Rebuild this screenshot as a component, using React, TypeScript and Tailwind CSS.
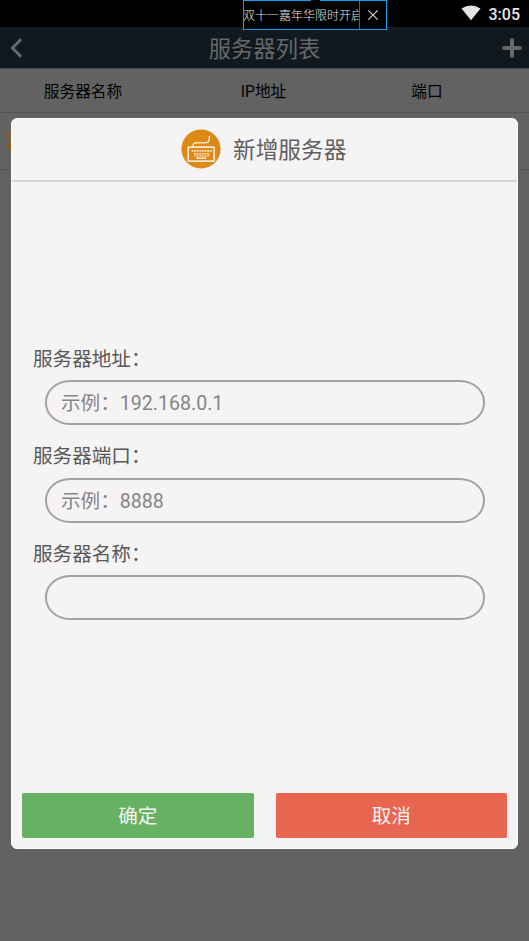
import React from "react";

const columns = [
	{ text: "服务器名称", width: "w-[166px]" },
	{ text: "IP地址", width: "w-[195px]" },
	{ text: "端口", width: "w-[132px]" },
];

const fields = [
	{ label: "服务器地址：", placeholder: "示例：192.168.0.1" },
	{ label: "服务器端口：", placeholder: "示例：8888" },
	{ label: "服务器名称：", placeholder: "" },
];

const StatusBar = () => (
	<div className="flex h-[27px] items-center justify-end bg-black pr-[9px] text-[#e4e4e4]">
		<svg className="mr-[8px] mb-px h-[16px] w-[20px]" viewBox="0 0 20 16" fill="currentColor">
			<path d="M0.5 3.6Q10-2.6 19.5 3.6L10 15.3Z" />
		</svg>
		<span className="pt-px text-[16px] leading-[27px] font-medium">3:05</span>
	</div>
);

const Banner = () => (
	<div className="absolute top-0 left-[243px] flex h-[30px] w-[144px] border border-[#149fe8] bg-black">
		<div className="w-[116px] overflow-hidden border-r border-[#0f75ab] pt-px text-[12px] leading-[28px] font-light whitespace-nowrap text-[#e4e4e4]">
			<span className="-ml-px">双十一嘉年华限时开启</span>
		</div>
		<div className="flex flex-1 items-center justify-center">
			<svg className="h-[10px] w-[10px]" viewBox="0 0 10 10" stroke="#d8d8d8" strokeWidth="1.1">
				<path d="M0.3 0.3L9.7 9.7M9.7 0.3L0.3 9.7" />
			</svg>
		</div>
		<div className="absolute -top-px left-[67px] h-px w-[9px] bg-black" />
	</div>
);

const TitleBar = () => (
	<div className="flex h-[42px] items-center justify-between border-b border-[#4b4e50] bg-[#111920] pr-[7px] pl-[10px] text-[#686868]">
		<svg className="h-[20px] w-[13px]" viewBox="0 0 13 20" fill="none" stroke="currentColor" strokeWidth="3">
			<path d="M11 1.3L2.5 10L11 18.7" />
		</svg>
		<h1 className="ml-[4px] pt-[3px] text-[22.3px] leading-[38px]">服务器列表</h1>
		<svg className="h-[20px] w-[20px]" viewBox="0 0 20 20" stroke="currentColor" strokeWidth="4">
			<path d="M10 0.5V19.5M0.5 10H19.5" />
		</svg>
	</div>
);

const KeyboardIcon = () => (
	<svg className="mb-[2px] h-[40px] w-[40px]" viewBox="0 0 40 40" fill="none">
		<circle cx="20" cy="20" r="19.6" fill="#dd8918" />
		<g stroke="#f9e6cb">
			<path d="M28.3 7V9.8Q28.3 13.8 24.3 13.8H15.5Q11.8 13.8 11.8 18" strokeWidth="1.5" />
			<rect x="7.2" y="18.2" width="26" height="14" rx="0.8" strokeWidth="1.7" />
			<path d="M10.7 21.9H31" strokeWidth="1.8" strokeDasharray="1.8 0.8" />
			<path d="M13 24.7H29" strokeWidth="1.6" strokeDasharray="1.8 0.8" />
			<path d="M13.5 26.9H28" strokeWidth="1.2" strokeDasharray="1.8 0.8" />
			<path d="M15.3 29.1H25.2" strokeWidth="1.7" />
		</g>
	</svg>
);

const AddServerDialog = () => (
	<div className="absolute top-[118px] left-[11px] flex h-[731px] w-[507px] flex-col rounded-[6px] border border-white bg-[#f5f3f4]">
		<div className="flex h-[63px] items-center border-b-2 border-[#d6d4d5] pl-[169px]">
			<KeyboardIcon />
			<h2 className="ml-[12px] pt-[2px] text-[22.7px] leading-[40px] text-[#5f5f5f]">新增服务器</h2>
		</div>
		<div className="flex flex-1 flex-col pt-[156.5px]">
			{fields.map(field => (
				<label key={field.label} className="flex h-[97.5px] flex-col pr-[22px] pl-[21px]">
					<span className="h-[41.5px] text-[19.6px] leading-[41px] text-[#585858]">{field.label}</span>
					<input
						type="text"
						placeholder={field.placeholder}
						className="ml-[12px] h-[45px] w-[440px] rounded-[25px/22px] border-2 border-[#a3a1a2] pt-[2px] pl-[14px] text-[19.6px] placeholder:text-[#858585]"
					/>
				</label>
			))}
		</div>
		<div className="flex gap-[22px] px-[10px] pb-[10px] text-[19.6px] text-[#f5f3f4]">
			<button className="h-[45px] flex-1 rounded-[2px] bg-[#66b162] pt-[2px] leading-[43px]">确定</button>
			<button className="h-[45px] flex-1 rounded-[2px] bg-[#e8654f] pt-[2px] leading-[43px]">取消</button>
		</div>
	</div>
);

const App = () => {
	return (
		<main
			lang="zh-CN"
			className="relative h-[941px] w-[529px] overflow-hidden bg-[#626262] font-['Roboto','Noto_Sans_CJK_SC',sans-serif]"
		>
			<StatusBar />
			<TitleBar />
			<div className="flex h-[44px] border-b border-[#545454] pt-px text-[15.7px] leading-[43px] text-black">
				{columns.map(column => (
					<div key={column.text} className={`${column.width} text-center`}>
						{column.text}
					</div>
				))}
			</div>
			<div className="h-[57px] border-b border-[#545454] pl-[5px] text-[22px] leading-[57px] text-[#98600f]">客</div>
			<AddServerDialog />
			<Banner />
		</main>
	);
};

export default App;
